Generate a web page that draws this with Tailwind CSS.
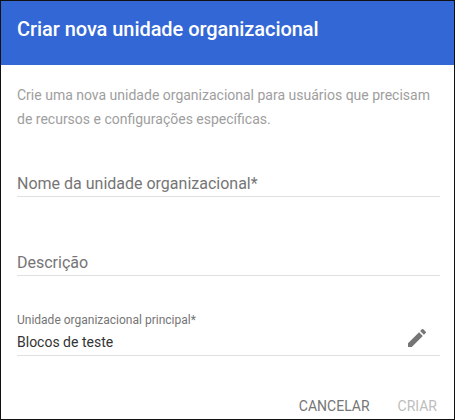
<!DOCTYPE html>
<html><head><script src="https://cdn.jsdelivr.net/npm/@tailwindcss/browser@4"></script></head>
<body class="m-0 bg-white">
<div class="w-[455px] h-[420px] box-border border border-[#111] bg-white flex flex-col font-['Roboto',sans-serif] overflow-hidden">
<div class="h-[64px] shrink-0 bg-[#3367d6] text-white text-[20px] tracking-[-0.06px] font-medium pl-[16px] pt-[16px] leading-[24px]">Criar nova unidade organizacional</div>
<div class="pl-[16px] pr-[14px] flex flex-col flex-1">
<p class="mt-[18px] text-[14px] leading-[24px] text-[#9e9e9e]">Crie uma nova unidade organizacional para usuários que precisam de recursos e configurações específicas.</p>
<div class="mt-[40px] h-[26px] pt-[1px] text-[16px] leading-[24px] text-[#757575] border-b border-[#e0e0e0]">Nome da unidade organizacional*</div>
<div class="mt-[53px] h-[26px] pt-[1px] text-[16px] leading-[24px] text-[#757575] border-b border-[#e0e0e0]">Descrição</div>
<div class="mt-[34px] h-[46px] pt-[2px] box-border border-b border-[#e0e0e0] relative">
<div class="text-[12px] leading-[16px] text-[#757575]">Unidade organizacional principal*</div>
<div class="text-[14px] leading-[20px] mt-[4px] text-[#333333]">Blocos de teste</div>
<svg class="absolute right-[11px] top-[16px]" width="24" height="24" viewBox="0 0 24 24" fill="#757575"><path d="M3 17.25V21h3.75L17.81 9.94l-3.75-3.75L3 17.25zM20.71 7.04a1 1 0 0 0 0-1.41l-2.34-2.34a1 1 0 0 0-1.41 0l-1.83 1.83 3.75 3.75 1.83-1.83z"/></svg>
</div>
<div class="mt-auto mb-[3px] flex justify-end gap-[28px] pr-[3px] text-[14px] font-normal leading-[20px]">
<span class="text-[#757575]">CANCELAR</span><span class="text-[#bdbdbd]">CRIAR</span>
</div>
</div>
</div>
</body></html>
